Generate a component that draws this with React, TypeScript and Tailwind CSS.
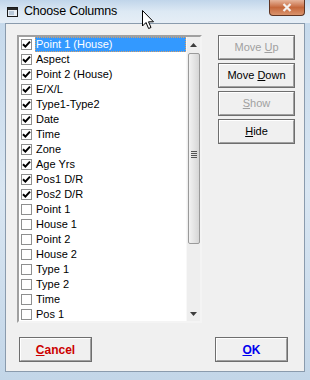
import React from "react";

const items: [string, boolean][] = [
  ["Point 1 (House)", true],
  ["Aspect", true],
  ["Point 2 (House)", true],
  ["E/X/L", true],
  ["Type1-Type2", true],
  ["Date", true],
  ["Time", true],
  ["Zone", true],
  ["Age Yrs", true],
  ["Pos1 D/R", true],
  ["Pos2 D/R", true],
  ["Point 1", false],
  ["House 1", false],
  ["Point 2", false],
  ["House 2", false],
  ["Type 1", false],
  ["Type 2", false],
  ["Time", false],
  ["Pos 1", false],
];

function Check() {
  return (
    <svg width="9" height="9" viewBox="0 0 9 9">
      <path d="M1 4.2 L3.4 6.6 L8 1.6" fill="none" stroke="#000" strokeWidth="2" />
    </svg>
  );
}

function Btn({ children, disabled, className = "" }: { children: React.ReactNode; disabled?: boolean; className?: string }) {
  return (
    <div className={`h-[25px] border border-[#6e6e6e] bg-[#f0f0f0] flex ${className}`}>
      <div className="flex-1 border-t border-l border-white border-r border-b border-r-[#a0a0a0] border-b-[#a0a0a0] flex items-center justify-center">
        <span className={disabled ? "text-[#a0a0a0]" : "text-black"}>{children}</span>
      </div>
    </div>
  );
}

export default function App() {
  return (
    <div
      className="relative w-[310px] h-[380px] overflow-hidden flex flex-col bg-gradient-to-b from-[#c4d8eb] via-[#d9e6f2] to-[#c3d6e8]"
      style={{ fontFamily: '"Liberation Sans", Arial, sans-serif' }}
    >
      {/* title bar */}
      <div className="h-[23px] flex items-center pl-[7px] relative bg-gradient-to-b from-[#c0d5ea] via-[#dde9f4] to-[#e6eef6]">
        <svg width="11" height="10" viewBox="0 0 11 10" className="mr-[6px] mt-[1px]">
          <rect x="0.5" y="0.5" width="10" height="9" fill="#e8eef4" stroke="#1a1a1a" />
          <rect x="1" y="1" width="9" height="2" fill="#2a2a2a" />
          <rect x="2" y="4" width="5" height="4" fill="#b8c8d8" />
        </svg>
        <span className="text-[12.5px] tracking-[-0.2px] text-black leading-none">Choose Columns</span>
        <div className="absolute left-[269px] top-0 w-[36px] h-[16px] rounded-b-[4px] border border-t-0 border-[#5e3422] bg-gradient-to-b from-[#e6b59c] via-[#c5683c] to-[#d9936c] flex items-center justify-center">
          <svg width="10" height="9" viewBox="0 0 10 9">
            <path d="M1.5 1 L8.5 8 M8.5 1 L1.5 8" stroke="#f4f0ee" strokeWidth="2.2" />
          </svg>
        </div>
      </div>

      <div className="flex flex-1">
        <div className="w-[5px]" />
        {/* client area */}
        <div className="w-[300px] h-[349px] bg-[#f0f0f0] border border-[#8a9bad] text-[11px] leading-none">
          <div className="flex mt-[11px] ml-[11px] gap-[16px]">
            {/* listbox */}
            <div className="w-[185px] h-[288px] border-2 border-t-[#a0a0a0] border-l-[#a0a0a0] border-r-[#f4f4f4] border-b-[#f4f4f4] bg-white flex">
              <div className="w-[167px] flex flex-col">
                {items.map(([label, checked], i) => (
                  <div key={i} className="h-[15px] flex items-center shrink-0">
                    <div className="w-[11px] h-[11px] ml-[2px] border border-[#8e8f8f] bg-white flex items-center justify-center">
                      {checked && <Check />}
                    </div>
                    <div
                      className={`ml-[3px] h-[15px] flex items-center pl-[1px] ${
                        i === 0 ? "bg-[#3399ff] text-white flex-1 border border-dotted border-[#d9a066]" : "text-black"
                      }`}
                    >
                      <span className={i === 0 ? "-ml-[1px]" : ""}>{label}</span>
                    </div>
                  </div>
                ))}
              </div>
              {/* scrollbar */}
              <div className="w-[14px] bg-[#eeeeee] border-l border-[#f8f8f8] flex flex-col items-center">
                <div className="h-[16px] flex items-center justify-center">
                  <svg width="7" height="4" viewBox="0 0 7 4">
                    <path d="M0 4 L3.5 0 L7 4 Z" fill="#3c3c3c" />
                  </svg>
                </div>
                <div className="w-[12px] h-[191px] rounded-[2px] border border-[#9a9a9a] bg-gradient-to-r from-[#f2f2f2] via-[#e4e4e4] to-[#d6d6d6] flex items-center justify-center">
                  <div className="flex flex-col gap-[1px] mt-[12px]">
                    <div className="w-[6px] h-[1px] bg-[#555]" />
                    <div className="w-[6px] h-[1px] bg-[#555]" />
                    <div className="w-[6px] h-[1px] bg-[#555]" />
                    <div className="w-[6px] h-[1px] bg-[#555]" />
                  </div>
                </div>
                <div className="flex-1" />
                <div className="h-[15px] flex items-center justify-center">
                  <svg width="7" height="4" viewBox="0 0 7 4">
                    <path d="M0 0 L7 0 L3.5 4 Z" fill="#3c3c3c" />
                  </svg>
                </div>
              </div>
            </div>
            {/* buttons column */}
            <div className="w-[77px] flex flex-col gap-[3px]">
              <Btn disabled>
                Move <u>U</u>p
              </Btn>
              <Btn>
                Move <u>D</u>own
              </Btn>
              <Btn disabled>
                <u>S</u>how
              </Btn>
              <Btn>
                <u>H</u>ide
              </Btn>
            </div>
          </div>
          <div className="flex mt-[14px] ml-[13px] gap-[123px]">
            <Btn className="w-[73px]">
              <span className="font-bold text-[12px] text-[#cc0000]">
                <u>C</u>ancel
              </span>
            </Btn>
            <Btn className="w-[73px]">
              <span className="font-bold text-[12px] text-[#0000ee]">
                <u>O</u>K
              </span>
            </Btn>
          </div>
        </div>
      </div>

      {/* mouse cursor */}
      <svg className="absolute left-[142px] top-[10px]" width="13" height="20" viewBox="0 0 13 20">
        <path
          d="M0.5 0.5 L0.5 16 L4 12.5 L6.6 18.5 L9 17.5 L6.5 11.8 L11.5 11.8 Z"
          fill="#fff"
          stroke="#000"
          strokeWidth="1"
          strokeLinejoin="round"
        />
      </svg>
    </div>
  );
}
